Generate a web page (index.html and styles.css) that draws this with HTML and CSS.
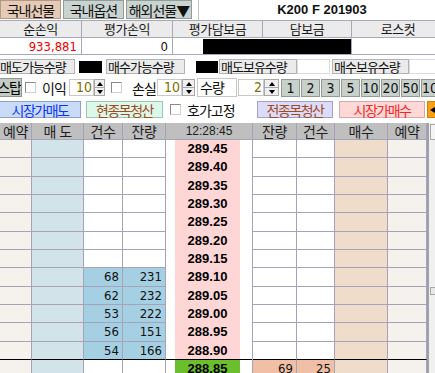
FILE: index.html
```html
<!DOCTYPE html>
<html lang="ko">
<head>
    <meta charset="UTF-8" />
    <meta name="viewport" content="width=device-width, initial-scale=1.0"/>
    <title>선물 호가창</title>
    <link rel="stylesheet" href="styles.css">
</head>
<body>
    <div class="screen">
        <div class="topbar">
            <button class="tab tab-on">국내선물</button>
            <button class="tab">국내옵션</button>
            <button class="tab tab-wide">해외선물▼</button>
            <div class="title">K200 F 201903</div>
        </div>

        <div class="summary">
            <div class="sum-h">순손익</div>
            <div class="sum-h">평가손익</div>
            <div class="sum-h">평가담보금</div>
            <div class="sum-h">담보금</div>
            <div class="sum-h">로스컷</div>
            <div class="sum-v loss">933,881</div>
            <div class="sum-v">0</div>
            <div class="sum-v masked"><span class="mask"></span></div>
            <div class="sum-v masked-full"></div>
            <div class="sum-v cut">0</div>
        </div>

        <div class="holdings">
            <div class="lbl lbl-1">매도가능수량</div>
            <div class="blk blk-1"></div>
            <div class="lbl lbl-2">매수가능수량</div>
            <div class="blk blk-2"></div>
            <div class="lbl lbl-3">매도보유수량</div>
            <div class="box box-3"></div>
            <div class="lbl lbl-4">매수보유수량</div>
            <div class="box box-4"></div>
        </div>

        <div class="order-opts">
            <button class="stop-btn"><span>스탑</span></button>
            <span class="check check-1"></span>
            <span class="opt-text text-1">이익</span>
            <div class="spin spin-1">
                <span class="spin-val">10</span>
                <span class="spin-arrows"><i class="up"></i><i class="down"></i></span>
            </div>
            <span class="check check-2"></span>
            <span class="opt-text text-2">손실</span>
            <div class="spin spin-2">
                <span class="spin-val">10</span>
                <span class="spin-arrows"><i class="up"></i><i class="down"></i></span>
            </div>
            <div class="qty-lbl">수량</div>
            <div class="spin spin-3">
                <span class="spin-val">2</span>
                <span class="spin-arrows"><i class="up"></i><i class="down"></i></span>
            </div>
            <div class="qty-btns">
                <button class="qbtn">1</button>
                <button class="qbtn">2</button>
                <button class="qbtn">3</button>
                <button class="qbtn">5</button>
                <button class="qbtn">10</button>
                <button class="qbtn">20</button>
                <button class="qbtn">50</button>
                <button class="qbtn">100</button>
            </div>
        </div>

        <div class="actions">
            <button class="act mkt-sell">시장가매도</button>
            <button class="act clear-one">현종목청산</button>
            <span class="check check-3"></span>
            <span class="opt-text text-3">호가고정</span>
            <button class="act clear-all">전종목청산</button>
            <button class="act mkt-buy">시장가매수</button>
            <button class="act collapse"><i class="left"></i></button>
        </div>

        <div class="board">
            <div class="book">
                <div class="row head">
                    <div class="c">예약</div>
                    <div class="c">매 도</div>
                    <div class="c">건수</div>
                    <div class="c">잔량</div>
                    <div class="c time">12:28:45</div>
                    <div class="c">잔량</div>
                    <div class="c">건수</div>
                    <div class="c">매수</div>
                    <div class="c">예약</div>
                </div>

                <div class="row">
                    <div class="c rsv"></div><div class="c ask"></div><div class="c num"></div><div class="c num"></div>
                    <div class="c price"><span class="px">289.45</span></div>
                    <div class="c num"></div><div class="c num"></div><div class="c bid"></div><div class="c rsv"></div>
                </div>
                <div class="row">
                    <div class="c rsv"></div><div class="c ask"></div><div class="c num"></div><div class="c num"></div>
                    <div class="c price"><span class="px">289.40</span></div>
                    <div class="c num"></div><div class="c num"></div><div class="c bid"></div><div class="c rsv"></div>
                </div>
                <div class="row">
                    <div class="c rsv"></div><div class="c ask"></div><div class="c num"></div><div class="c num"></div>
                    <div class="c price"><span class="px">289.35</span></div>
                    <div class="c num"></div><div class="c num"></div><div class="c bid"></div><div class="c rsv"></div>
                </div>
                <div class="row">
                    <div class="c rsv"></div><div class="c ask"></div><div class="c num"></div><div class="c num"></div>
                    <div class="c price"><span class="px">289.30</span></div>
                    <div class="c num"></div><div class="c num"></div><div class="c bid"></div><div class="c rsv"></div>
                </div>
                <div class="row">
                    <div class="c rsv"></div><div class="c ask"></div><div class="c num"></div><div class="c num"></div>
                    <div class="c price"><span class="px">289.25</span></div>
                    <div class="c num"></div><div class="c num"></div><div class="c bid"></div><div class="c rsv"></div>
                </div>
                <div class="row">
                    <div class="c rsv"></div><div class="c ask"></div><div class="c num"></div><div class="c num"></div>
                    <div class="c price"><span class="px">289.20</span></div>
                    <div class="c num"></div><div class="c num"></div><div class="c bid"></div><div class="c rsv"></div>
                </div>
                <div class="row">
                    <div class="c rsv"></div><div class="c ask"></div><div class="c num"></div><div class="c num"></div>
                    <div class="c price"><span class="px">289.15</span></div>
                    <div class="c num"></div><div class="c num"></div><div class="c bid"></div><div class="c rsv"></div>
                </div>
                <div class="row">
                    <div class="c rsv"></div><div class="c ask"></div><div class="c num ask-q">68</div><div class="c num ask-q">231</div>
                    <div class="c price"><span class="px">289.10</span></div>
                    <div class="c num"></div><div class="c num"></div><div class="c bid"></div><div class="c rsv"></div>
                </div>
                <div class="row">
                    <div class="c rsv"></div><div class="c ask"></div><div class="c num ask-q">62</div><div class="c num ask-q">232</div>
                    <div class="c price"><span class="px">289.05</span></div>
                    <div class="c num"></div><div class="c num"></div><div class="c bid"></div><div class="c rsv"></div>
                </div>
                <div class="row">
                    <div class="c rsv"></div><div class="c ask"></div><div class="c num ask-q">53</div><div class="c num ask-q">222</div>
                    <div class="c price"><span class="px">289.00</span></div>
                    <div class="c num"></div><div class="c num"></div><div class="c bid"></div><div class="c rsv"></div>
                </div>
                <div class="row">
                    <div class="c rsv"></div><div class="c ask"></div><div class="c num ask-q">56</div><div class="c num ask-q">151</div>
                    <div class="c price"><span class="px">288.95</span></div>
                    <div class="c num"></div><div class="c num"></div><div class="c bid"></div><div class="c rsv"></div>
                </div>
                <div class="row split">
                    <div class="c rsv"></div><div class="c ask"></div><div class="c num ask-q">54</div><div class="c num ask-q">166</div>
                    <div class="c price"><span class="px">288.90</span></div>
                    <div class="c num"></div><div class="c num"></div><div class="c bid"></div><div class="c rsv"></div>
                </div>
                <div class="row">
                    <div class="c rsv"></div><div class="c ask"></div><div class="c num"></div><div class="c num"></div>
                    <div class="c price"><span class="px px-now">288.85</span></div>
                    <div class="c num bid-q">69</div><div class="c num bid-q">25</div><div class="c bid"></div><div class="c rsv"></div>
                </div>
            </div>

            <div class="scroll">
                <div class="scroll-up"><i class="up"></i></div>
                <div class="scroll-thumb"></div>
            </div>
        </div>
    </div>
</body>
</html>
```

FILE: styles.css
```css
* {
    box-sizing: border-box;
}

body {
    margin: 0;
    background-color: #fff;
    font-family: "Noto Sans CJK KR", "Liberation Sans", sans-serif;
    font-size: 13px;
    color: #111;
    overflow: hidden;
}

button {
    font-family: inherit;
    padding: 0;
    cursor: pointer;
}

.screen {
    width: 445px;
}

/* top tabs */
.topbar {
    display: flex;
    height: 20px;
}

.tab {
    width: 61px;
    height: 19px;
    margin-right: 2px;
    border: 1px solid #939c98;
    background-color: #c9d3cf;
    font-size: 14px;
    line-height: 16px;
    letter-spacing: -1px;
    color: #111;
}

.tab-on {
    background-color: #e5cbb5;
    border-color: #b39984;
}

.tab-wide {
    width: 66px;
}

.title {
    flex: 1;
    margin-left: 4px;
    border-left: 1px solid #c4c4cc;
    text-align: center;
    font-family: "Liberation Sans", sans-serif;
    font-weight: bold;
    font-size: 13px;
    line-height: 19px;
}

/* summary */
.summary {
    display: grid;
    grid-template-columns: 82px 91px 90px 89px 93px;
    border-top: 1px solid #a8a8b8;
}

.sum-h,
.sum-v {
    height: 17px;
    border-right: 1px solid #a8a8b8;
    border-bottom: 1px solid #a8a8b8;
}

.sum-h {
    background-color: #ebebeb;
    text-align: center;
    line-height: 16px;
    letter-spacing: -0.5px;
    color: #1a1a1a;
}

.sum-v {
    text-align: right;
    padding-right: 4px;
    font-family: "Liberation Sans Narrow", "DejaVu Sans Condensed", "Liberation Sans", sans-serif;
    font-size: 13px;
    line-height: 17px;
}

.sum-v.loss {
    color: #f00000;
}

.sum-v.masked {
    display: flex;
    justify-content: flex-end;
    padding: 1px 0 0;
    border-right: none;
}

.mask {
    width: 60px;
    background-color: #000;
}

.sum-v.masked-full {
    background-color: #000;
    border-top: 1px solid #fff;
}

.sum-v.cut {
    padding-right: 0;
    margin-right: -6px;
}

/* quantity info */
.holdings {
    display: flex;
    align-items: center;
    margin-top: 4px;
    height: 15px;
}

.lbl {
    height: 15px;
    background-color: #ebebeb;
    border: 1px solid #b4b4b4;
    line-height: 13px;
    letter-spacing: -1px;
    white-space: nowrap;
}

.lbl-1 { width: 75px; border-left: none; }
.lbl-2 { width: 79px; margin-left: 4px; padding-left: 1px; }
.lbl-3 { width: 78px; margin-left: 1px; padding-left: 1px; }
.lbl-4 { width: 77px; margin-left: 2px; padding-left: 1px; }

.blk {
    height: 12px;
    background-color: #000;
}

.blk-1 { width: 23px; margin-left: 4px; }
.blk-2 { width: 22px; margin-left: 11px; }

.box {
    height: 15px;
    background-color: #fff;
    border: 1px solid #dcdcdc;
}

.box-3 { width: 33px; }
.box-4 { width: 36px; }

/* order options */
.order-opts {
    display: flex;
    align-items: center;
    margin-top: 3px;
    height: 21px;
}

.stop-btn {
    width: 22px;
    height: 19px;
    display: flex;
    justify-content: flex-end;
    overflow: hidden;
    background-color: #c2cbc4;
    border: 1px solid #8f9890;
    border-left: none;
    font-size: 14px;
    line-height: 16px;
    letter-spacing: -1px;
    white-space: nowrap;
}

.check {
    width: 11px;
    height: 11px;
    background-color: #fff;
    border: 1px solid #8a8a8a;
    border-right-color: #d0d0d0;
    border-bottom-color: #d0d0d0;
}

.check-1 { margin-left: 3px; }
.check-2 { margin-left: 6px; }
.check-3 { margin-left: 7px; }

.opt-text {
    font-size: 14px;
    line-height: 16px;
    letter-spacing: -1px;
    white-space: nowrap;
}

.text-1 { margin-left: 6px; width: 22px; }
.text-2 { margin-left: 10px; width: 22px; }
.text-3 { margin-left: 6px; width: 70px; }

.spin {
    display: flex;
    height: 17px;
}

.spin-1 { margin-left: 5px; }
.spin-2 { margin-left: 3px; }
.spin-3 { margin-left: 1px; }

.spin-val {
    width: 25px;
    background-color: #fff;
    border: 1px solid #c8c8c8;
    text-align: right;
    padding-right: 1px;
    font-family: "Liberation Sans Narrow", "DejaVu Sans Condensed", "Liberation Sans", sans-serif;
    font-size: 14px;
    line-height: 15px;
    color: #807000;
}

.spin-3 .spin-val {
    width: 26px;
}

.spin-arrows {
    display: flex;
    flex-direction: column;
    width: 11px;
}

.spin-2 .spin-arrows { width: 13px; }
.spin-3 .spin-arrows { width: 15px; }

.spin-arrows i {
    flex: 1;
    display: flex;
    align-items: center;
    justify-content: center;
    background-color: #f0f0f0;
    border: 1px solid #a8a8a8;
}

.spin-arrows i + i {
    border-top: none;
}

.up::before,
.down::before {
    content: "";
    border-left: 3px solid transparent;
    border-right: 3px solid transparent;
}

.up::before {
    border-bottom: 4px solid #000;
}

.down::before {
    border-top: 4px solid #000;
}

.qty-lbl {
    width: 40px;
    height: 19px;
    margin-left: 2px;
    border: 1px solid #c8c8c8;
    background-color: #fff;
    font-size: 14px;
    line-height: 16px;
    letter-spacing: -1px;
    padding-left: 2px;
}

.qty-btns {
    display: flex;
    gap: 1px;
    margin-left: 2px;
}

.qbtn {
    width: 19px;
    height: 18px;
    background-color: #c8d0cc;
    border: 1px solid #939b96;
    font-family: "Liberation Sans Narrow", "DejaVu Sans Condensed", "Liberation Sans", sans-serif;
    font-size: 14px;
    line-height: 16px;
    color: #111;
    overflow: hidden;
    white-space: nowrap;
}

/* action buttons */
.actions {
    display: flex;
    align-items: center;
    margin-top: 2px;
    height: 19px;
}

.act {
    height: 17px;
    border: 1px solid #a0a0a8;
    font-size: 14px;
    line-height: 14px;
    letter-spacing: -1.5px;
}

.mkt-sell {
    width: 81px;
    background-color: #c8dcfa;
    border-color: #8ea2c8;
    border-left: none;
    color: #1034f0;
}

.clear-one {
    width: 77px;
    margin-left: 5px;
    background-color: #dcf8ea;
    border-color: #9cc8b0;
    color: #a2481c;
}

.clear-all {
    width: 76px;
    background-color: #dcdcfa;
    border-color: #a0a0c8;
    color: #a2481c;
}

.mkt-buy {
    width: 86px;
    margin-left: 6px;
    background-color: #ffd8d8;
    border-color: #d8a8a8;
    color: #f02828;
}

.collapse {
    width: 16px;
    margin-left: 2px;
    background-color: #f8a010;
    border-color: #c88010;
    display: flex;
    align-items: center;
    padding-left: 2px;
}

.left::before {
    content: "";
    display: block;
    border-top: 3px solid transparent;
    border-bottom: 3px solid transparent;
    border-right: 5px solid #000;
}

/* order book */
.board {
    display: flex;
    margin-top: 4px;
}

.book {
    display: grid;
    grid-template-columns: 32px 52px 39px 43px 87px 44px 38px 53px 39px;
    grid-template-rows: 17px;
    grid-auto-rows: 18.333px;
    width: 427px;
}

.row {
    display: contents;
}

.c {
    border-right: 1px solid #a4a4b6;
    border-bottom: 1px solid #a4a4b6;
}

.head .c {
    background-color: #bfbfbf;
    text-align: center;
    font-size: 14px;
    line-height: 16px;
    letter-spacing: -0.5px;
    color: #1e1e1e;
}

.head .time {
    font-family: "Liberation Sans", sans-serif;
    font-size: 12px;
    letter-spacing: 0;
}

.rsv { background-color: #f5f2ee; }
.ask { background-color: #d3e3ea; }
.bid { background-color: #f0dccb; }

.num {
    text-align: right;
    padding-right: 3px;
    font-family: "Liberation Sans Narrow", "DejaVu Sans Condensed", "Liberation Sans", sans-serif;
    font-size: 13px;
    line-height: 17px;
}

.ask-q { background-color: #a5cfe3; }
.bid-q { background-color: #f0bfa5; }

.price {
    display: flex;
    padding: 0 12px 0 9px;
    border-bottom: none;
}

.px {
    flex: 1;
    background-color: #ffd6d6;
    text-align: center;
    font-family: "Liberation Sans", sans-serif;
    font-weight: bold;
    font-size: 13px;
    line-height: 18px;
    color: #000;
}

.px-now {
    background-color: #6cbf2c;
}

.split .c {
    border-bottom-color: #000;
}

.split .price {
    background: linear-gradient(#000, #000) bottom / 100% 1px no-repeat #fff;
}

.split .px {
    margin-bottom: 1px;
}

.scroll {
    position: relative;
    width: 18px;
    background-color: #f0f0f0;
    border-left: 2px solid #a0a0aa;
}

.scroll-up {
    display: flex;
    align-items: center;
    justify-content: center;
    width: 16px;
    height: 16px;
    margin: 1px 0 0 1px;
    background-color: #f4f4f4;
    border: 1px solid #a8a8a8;
}

.scroll-thumb {
    position: absolute;
    top: 164px;
    left: 1px;
    width: 15px;
    height: 8px;
    background-color: #e8e8e8;
    border: 1px solid #a8a8a8;
}
```
